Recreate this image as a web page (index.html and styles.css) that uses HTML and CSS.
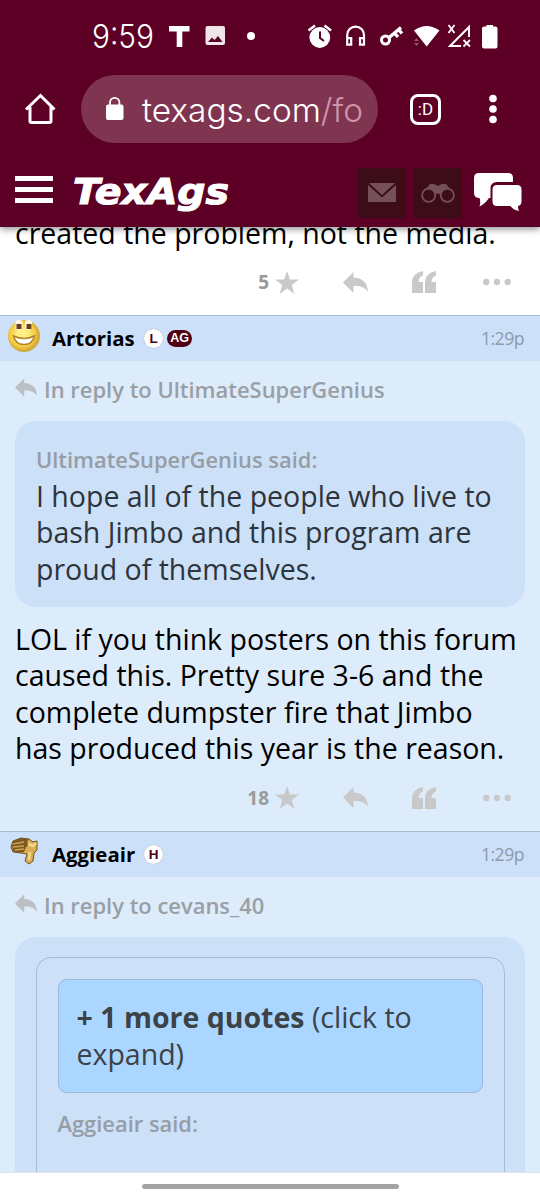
FILE: index.html
```html
<!DOCTYPE html>
<html lang="en">
<head>
<meta charset="utf-8">
<title>TexAgs Forum</title>
<link rel="stylesheet" href="styles.css">
</head>
<body>
<svg class="defs" width="0" height="0" aria-hidden="true">
  <symbol id="star" viewBox="0 0 24 23"><path d="M12 0l2.900 8.500H24l-7.300 5.400 2.800 9.100-7.500-5.600L4.500 23l2.800-9.100L0 8.500h9.100z"/></symbol>
  <symbol id="reply" viewBox="0 0 25 21"><path d="M0 10.500L10.500 0v5.500C19 6 24.500 10 25 19.500c-4-4.500-8-6-14.500-5.500v7z"/></symbol>
  <symbol id="quote" viewBox="0 0 24 22"><path d="M11 0v4.500Q6.500 6 6.500 11H11V22H0V12Q0 2 11 0zM24 0v4.500Q19.500 6 19.500 11H24V22H13V12Q13 2 24 0z"/></symbol>
  <symbol id="dots" viewBox="0 0 28 8"><circle cx="3.300" cy="4" r="3.200"/><circle cx="14" cy="4" r="3.200"/><circle cx="24.700" cy="4" r="3.200"/></symbol>
</svg>
<div class="screen">
  <header class="top">
    <svg class="status" viewBox="0 0 540 70">
      <text class="time" x="92" y="48" textLength="62" lengthAdjust="spacingAndGlyphs">9:59</text>
      <g fill="#fff">
        <path d="M169 26h20.500v5.500H182.300V47h-5.600V31.500H169z"/>
        <path fill-rule="evenodd" opacity=".9" d="M207.500 26h15.500a2 2 0 0 1 2 2v15a2 2 0 0 1-2 2h-15.500a2 2 0 0 1-2-2V28a2 2 0 0 1 2-2zm.5 16h14.500l-4.500-6-3.500 4-2.500-2.500z"/>
        <circle cx="251" cy="36" r="4"/>
        <circle cx="319.800" cy="37.500" r="10.400"/>
        <path d="M320 31.500v6.500l4 3" stroke="#5c0025" stroke-width="2" fill="none"/>
        <path d="M308.500 30.500l6.500-5M331 30.500l-6.500-5" stroke="#fff" stroke-width="2.400"/>
      </g>
      <g fill="none" stroke="#fff" stroke-width="2.200">
        <path d="M347.200 44V35a8.400 8.400 0 0 1 16.800 0v9M347.200 38.200h4v6.500h-4zM360 38.200h4v6.500h-4z"/>
        <circle cx="385.500" cy="40" r="4" stroke-width="3"/>
        <path d="M388.500 38L401 27.500M394.500 33l3.500 4M398.500 29.500l3.500 4" stroke-width="3.400"/>
        <path d="M461 46h-11l19-19v10" stroke-width="2"/>
        <path d="M448.500 25l6 8M454.500 25l-6 8M463.500 40l6.500 6.500M470 40l-6.500 6.500" stroke-width="1.800"/>
      </g>
      <path fill="#fff" d="M414 30.500q12.500-9 25.500 0L426.700 46.500zM486.500 25v1.500H484q-2 0-2 2V46.500q0 2 2 2h11.500q2 0 2-2V28.500q0-2-2-2H493V25z"/>
      <path fill="#8f526b" d="M416.500 38l2.500 3h-5zM416.500 46l2.500-3h-5z"/>
    </svg>
    <div class="browser">
      <svg class="home" viewBox="0 0 32 32" width="32" height="32"><path d="M2 16.500L16.500 2.500l14 14M6 14V28q0 1.500 1.500 1.500h18Q27 29.500 27 28V14" fill="none" stroke="#fff" stroke-width="3"/></svg>
      <div class="omnibox">
        <svg width="297" height="68" viewBox="0 0 297 68">
          <path d="M29 31v-3.500a4.700 4.700 0 0 1 9.400 0V31" fill="none" stroke="#fff" stroke-width="1.800"/>
          <rect x="25" y="29.500" width="17.500" height="15.500" rx="2" fill="#fff"/>
          <text class="url" x="61" y="46.500" textLength="221" lengthAdjust="spacingAndGlyphs">texags.com<tspan class="path">/fo</tspan></text>
        </svg>
      </div>
      <div class="tabs">:D</div>
      <svg class="kebab" width="8" height="30" viewBox="0 0 8 30" fill="#fff"><circle cx="4" cy="4.500" r="3.800"/><circle cx="4" cy="15" r="3.800"/><circle cx="4" cy="25.500" r="3.800"/></svg>
    </div>
    <div class="site">
      <div class="menu"><i></i><i></i><i></i></div>
      <svg class="logo" width="162" height="50" viewBox="0 0 162 50"><text x="1" y="31.500" textLength="156" lengthAdjust="spacingAndGlyphs">TexAgs</text></svg>
      <div class="tools">
        <div class="tile"><svg width="28" height="20" viewBox="0 0 28 20" fill="#765058"><path d="M1 0h26L14 12zM0 2l14 12.500L28 2v17H0z"/></svg></div>
        <div class="tile"><svg width="34" height="20" viewBox="0 0 34 20" fill="none" stroke="#765058" stroke-width="1.800"><circle cx="7.700" cy="12.300" r="6.600"/><circle cx="26.300" cy="12.300" r="6.600"/><path d="M3 8l6-7h4l4 2 4-2h4l6 7q-8-5-11 4-3-3-6 0Q11 3 3 8z" fill="#765058" stroke="none"/></svg></div>
        <svg class="chat" width="48" height="40" viewBox="0 0 48 40" fill="#fff"><path d="M5 0h29q5 0 5 5v4H23q-6.500 0-6.500 6.500V25H15q-4 6-9.500 8.500Q7 29 5.500 25 0 25 0 20V5q0-5 5-5z"/><path d="M23 12h20q4.500 0 4.500 4.500V28q0 4.500-3.500 5 0 3 1 5-6-1-8.500-5H23q-4.500 0-4.500-4.500v-12q0-4.500 4.500-4.500z"/></svg>
      </div>
    </div>
  </header>

  <main class="feed">
    <article class="post plain">
      <p class="body">created the problem, not the media.</p>
      <div class="actions">
        <span class="count">5</span><svg class="star"><use href="#star"/></svg><svg class="rep"><use href="#reply"/></svg><svg class="quo"><use href="#quote"/></svg><svg class="more"><use href="#dots"/></svg>
      </div>
    </article>

    <article class="post">
      <div class="head">
        <svg class="avatar" width="34" height="34" viewBox="0 0 34 34">
          <defs><radialGradient id="face" cx=".45" cy=".45"><stop offset=".3" stop-color="#ffef84"/><stop offset=".8" stop-color="#f2ca3e"/><stop offset="1" stop-color="#d3aa3c"/></radialGradient></defs>
          <circle cx="16" cy="17" r="16" fill="url(#face)"/>
          <rect x="7.500" y="1" width="7" height="10" rx="3" fill="#fff8e4"/><rect x="17" y="1" width="7" height="10" rx="3" fill="#fff8e4"/>
          <rect x="8.500" y="5" width="5" height="5" fill="#693c22"/><rect x="18.500" y="5" width="5" height="5" fill="#693c22"/>
          <path d="M5.500 17q10.500 5 21 0-2 8.500-10.500 8.500T5.500 17z" fill="#fff" stroke="#b28327" stroke-width="1.500"/>
        </svg>
        <span class="name">Artorias</span><span class="badge">L</span><span class="badge ag">AG</span><span class="when">1:29p</span>
      </div>
      <div class="inreply"><svg class="rep small"><use href="#reply"/></svg><span>In reply to UltimateSuperGenius</span></div>
      <blockquote class="quote">
        <div class="said">UltimateSuperGenius said:</div>
        <p>I hope all of the people who live to<br>bash Jimbo and this program are<br>proud of themselves.</p>
      </blockquote>
      <p class="body">LOL if you think posters on this forum<br>caused this. Pretty sure 3-6 and the<br>complete dumpster fire that Jimbo<br>has produced this year is the reason.</p>
      <div class="actions">
        <span class="count">18</span><svg class="star"><use href="#star"/></svg><svg class="rep"><use href="#reply"/></svg><svg class="quo"><use href="#quote"/></svg><svg class="more"><use href="#dots"/></svg>
      </div>
    </article>

    <article class="post">
      <div class="head">
        <svg class="avatar" width="34" height="34" viewBox="0 0 34 34">
          <path d="M5 6l8-3 8 1 4 3 4-1v9l-3 3-1 8-4 3-4-3 2-7-6-1-8-1-2-5z" fill="#d9ad55" stroke="#76521e"/>
          <path d="M5 6l8-3 8 1-2 3 2 3-3 2-2 5-6 1-5-2-1-5z" fill="#795a26"/>
          <path d="M5 9l11-2M5 12l11-1M7 15l9-1" stroke="#d0a04a" stroke-width="1.300"/>
          <path d="M20 9l5 2 3-3M22 17l-1 8" stroke="#f6d985" stroke-width="2.500" fill="none"/>
        </svg>
        <span class="name">Aggieair</span><span class="badge">H</span><span class="when">1:29p</span>
      </div>
      <div class="inreply"><svg class="rep small"><use href="#reply"/></svg><span>In reply to cevans_40</span></div>
      <blockquote class="quote outer">
        <div class="nested">
          <div class="expand"><b>+ 1 more quotes</b> (click to<br>expand)</div>
          <div class="said">Aggieair said:</div>
        </div>
      </blockquote>
    </article>
  </main>
  <footer class="gesture"><i></i></footer>
</div>
</body>
</html>
```
FILE: styles.css
```css
* { box-sizing: border-box; }
body { margin: 0; font-family: "Open Sans", sans-serif; }
p, blockquote { margin: 0; }
svg { display: block; flex: none; }
.defs { position: absolute; }
.screen { width: 540px; height: 1200px; display: flex; flex-direction: column; overflow: hidden; background: #fff; }
.top { height: 227px; flex: none; background: #5c0025; box-shadow: 0 2px 7px rgba(0,0,0,.45); z-index: 1; }
.status { width: 540px; height: 70px; }
.time { font: 300 33px Inter, sans-serif; fill: #fff; }
.browser { height: 78px; padding: 0 0 0 24px; display: flex; align-items: center; }
.omnibox { width: 297px; height: 68px; margin-left: 25px; border-radius: 34px; background: #7f3450; }
.url { font: 300 33px Inter, sans-serif; fill: #fff; }
.path { fill: #d095ac; }
.tabs { width: 31px; height: 31px; margin-left: 32px; border: 3px solid #fff; border-radius: 8px; color: #fff; font: 17px/24px Roboto, sans-serif; text-align: center; }
.kebab { margin-left: 48px; }
.site { height: 79px; display: flex; padding-left: 15px; }
.menu { width: 38px; padding-top: 28px; display: flex; flex-direction: column; gap: 6px; }
.menu i { height: 5px; background: #fff; }
.logo { margin: 24px 0 0 19px; overflow: visible; }
.logo text { font: italic bold 35px "DejaVu Sans", sans-serif; fill: #fff; stroke: #fff; stroke-width: 1.1px; }
.tools { display: flex; gap: 7px; margin-left: 123px; padding-top: 20px; }
.tile { width: 49px; height: 50px; border-radius: 4px; background: #3d0c19; display: flex; align-items: center; justify-content: center; }
.chat { margin: 5px 0 0 5px; }
.feed { height: 946px; flex: none; overflow: hidden; border-bottom: 1px solid #dbe4ed; }
.post { background: #ddecfb; }
.plain { background: #fff; height: 88px; display: flow-root; }
.body { margin-left: 15px; font-size: 28.500px; line-height: 36.500px; color: #000; white-space: nowrap; }
.plain .body { margin-top: -12px; }
.actions { height: 64px; padding-bottom: 3px; display: flex; align-items: center; color: #999; fill: #c9c9c9; }
.count { width: 269px; text-align: right; font-size: 19px; font-weight: 700; }
.star { width: 24px; height: 23px; margin-left: 6px; }
.rep { width: 25px; height: 21px; margin-left: 44px; }
.quo { width: 24px; height: 22px; margin-left: 44px; }
.more { width: 28px; height: 8px; margin-left: 47px; }
.head { height: 46px; border-top: 1px solid #a7bbd0; background: #cce0f9; display: flex; align-items: center; padding: 0 16px 1px 8px; }
.avatar { width: 34px; margin: -5px 10px 0 0; }
.name { font-size: 20.400px; font-weight: 700; width: 92px; white-space: nowrap; }
.badge { width: 19px; height: 19px; margin-top: 1px; border-radius: 10px; background: #fff; color: #500014; box-shadow: 0 0 1px #999; font: bold 13.500px/19px "Liberation Sans", sans-serif; text-align: center; }
.ag { width: 25px; height: 17px; margin-left: 4px; background: #500014; color: #fff; font-size: 12.500px; line-height: 17px; box-shadow: none; }
.when { margin-left: auto; color: #8c9aa9; font-size: 17.600px; letter-spacing: -.5px; }
.inreply { height: 60px; display: flex; align-items: center; padding: 0 0 3px 15px; gap: 7px; font-size: 21.950px; font-weight: 600; color: #999fa5; white-space: nowrap; }
.rep.small { width: 22px; height: 19px; margin: -4px 0 0; fill: #bdc0c3; }
.quote { margin: 0 15px; width: 510px; height: 186px; padding: 21px; border-radius: 21px; background: #cce0f8; color: #2d343b; font-size: 28.500px; line-height: 36.600px; white-space: nowrap; }
.said { color: #969da5; font-size: 21.900px; font-weight: 600; line-height: 36px; }
.quote p { margin-top: -.5px; }
.quote + .body { margin-top: 13.500px; margin-bottom: .5px; }
.outer { height: 270px; padding: 20px 20.500px; border-radius: 21px 21px 0 0; }
.nested { height: 260px; border: 1px solid #a5bcda; border-radius: 15px; padding: 21px; }
.expand { height: 114px; padding: 19px 18px; border: 1px solid #98b8dc; border-radius: 9px; background: #abd6ff; color: #3c4246; margin-bottom: 13px; }
.gesture { height: 27px; flex: none; display: flex; justify-content: center; padding-top: 11px; }
.gesture i { width: 257px; height: 5px; border-radius: 3px; background: #a4a4a4; }
```
